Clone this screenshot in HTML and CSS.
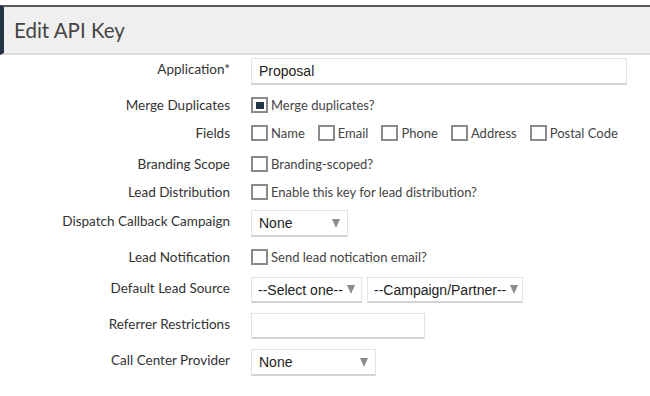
FILE: index.html
```html
<!DOCTYPE html>
<html lang="en">

<head>
    <meta charset="UTF-8">
    <title>Edit API Key</title>
    <link rel="stylesheet" href="styles.css">
</head>

<body>
    <div class="page-header">
        <h1 class="page-title">Edit API Key</h1>
    </div>

    <form class="key-form">
        <div class="form-row row-input">
            <label class="row-label">Application*</label>
            <div class="text-input wide">Proposal</div>
        </div>

        <div class="form-row row-check">
            <label class="row-label">Merge Duplicates</label>
            <div class="check-group">
                <span class="check checked"></span><span class="check-text">Merge duplicates?</span>
            </div>
        </div>

        <div class="form-row row-check">
            <label class="row-label">Fields</label>
            <div class="check-group">
                <span class="check"></span><span class="check-text field">Name</span>
                <span class="check"></span><span class="check-text field">Email</span>
                <span class="check"></span><span class="check-text field">Phone</span>
                <span class="check"></span><span class="check-text field">Address</span>
                <span class="check"></span><span class="check-text">Postal Code</span>
            </div>
        </div>

        <div class="form-row row-check loose">
            <label class="row-label">Branding Scope</label>
            <div class="check-group">
                <span class="check"></span><span class="check-text">Branding-scoped?</span>
            </div>
        </div>

        <div class="form-row row-check">
            <label class="row-label">Lead Distribution</label>
            <div class="check-group">
                <span class="check"></span><span class="check-text">Enable this key for lead distribution?</span>
            </div>
        </div>

        <div class="form-row row-input tight">
            <label class="row-label">Dispatch Callback Campaign</label>
            <div class="select-box w-dispatch"><span>None</span><span class="caret"></span></div>
        </div>

        <div class="form-row row-check">
            <label class="row-label">Lead Notification</label>
            <div class="check-group">
                <span class="check"></span><span class="check-text">Send lead notication email?</span>
            </div>
        </div>

        <div class="form-row row-input">
            <label class="row-label">Default Lead Source</label>
            <div class="select-pair">
                <div class="select-box short w-source"><span>--Select one--</span><span class="caret"></span></div>
                <div class="select-box short w-partner"><span>--Campaign/Partner--</span><span class="caret"></span></div>
            </div>
        </div>

        <div class="form-row row-input tight">
            <label class="row-label">Referrer Restrictions</label>
            <div class="text-input narrow"></div>
        </div>

        <div class="form-row row-input tight">
            <label class="row-label">Call Center Provider</label>
            <div class="select-box w-provider"><span>None</span><span class="caret"></span></div>
        </div>
    </form>
</body>

</html>
```

FILE: styles.css
```css
html {
    background: #efefef;
}

body {
    margin: 0;
    padding: 0;
    min-height: 396px;
    background: #fff;
    font-family: Lato, "Open Sans", sans-serif;
    color: #333;
}

.page-header {
    margin-top: 5px;
    height: 46px;
    background: #efefef;
    border-top: 2px solid #5a5a5a;
    border-left: 4px solid #243447;
    border-bottom: 2px solid #dcdcdc;
    display: flex;
    align-items: center;
}

.page-title {
    margin: 0 0 0 10px;
    font-size: 20.5px;
    font-weight: normal;
    color: #444;
}

.key-form {
    display: flex;
    flex-direction: column;
    gap: 12px;
    padding-top: 3px;
}

.form-row {
    display: flex;
    align-items: center;
}

.form-row.loose {
    margin-top: 3px;
}

.form-row.tight {
    margin-top: -2px;
}

.row-label {
    width: 230px;
    text-align: right;
    margin-right: 21px;
    font-size: 13.5px;
    color: #333;
}

.row-input {
    align-items: flex-start;
}

.row-input .row-label {
    padding-top: 3px;
}

.row-check {
    height: 16px;
}

.check-group {
    display: flex;
    align-items: center;
}

.check {
    box-sizing: border-box;
    width: 17px;
    height: 16px;
    border: 2px solid #8a8a8a;
    background: #fff;
    display: flex;
    align-items: center;
    justify-content: center;
}

.check.checked::after {
    content: '';
    width: 8px;
    height: 7px;
    background: #243447;
}

.check-text {
    margin-left: 3px;
    font-size: 13px;
    color: #444;
}

.check-text.field {
    margin-right: 13px;
}

.text-input,
.select-box {
    box-sizing: border-box;
    height: 26px;
    border: 1px solid #e2e2e2;
    border-bottom: 2px solid #d2d2d2;
    background: #fff;
    font-family: "Liberation Sans", Arial, sans-serif;
    font-size: 14px;
    color: #222;
    display: flex;
    align-items: center;
    padding: 0 7px;
    white-space: nowrap;
}

.text-input.wide {
    width: 376px;
    height: 27px;
}

.text-input.narrow {
    width: 174px;
}

.select-box {
    justify-content: space-between;
    height: 27px;
}

.select-box.short {
    height: 26px;
    padding: 0 6px;
}

.select-pair {
    display: flex;
    gap: 5px;
}

.w-dispatch {
    width: 97px;
}

.w-source {
    width: 111px;
}

.w-partner {
    width: 156px;
}

.w-provider {
    width: 125px;
}

.caret {
    flex-shrink: 0;
    width: 0;
    height: 0;
    border-left: 4px solid transparent;
    border-right: 4px solid transparent;
    border-top: 9px solid #8c8c8c;
    margin-left: 4px;
}
```
